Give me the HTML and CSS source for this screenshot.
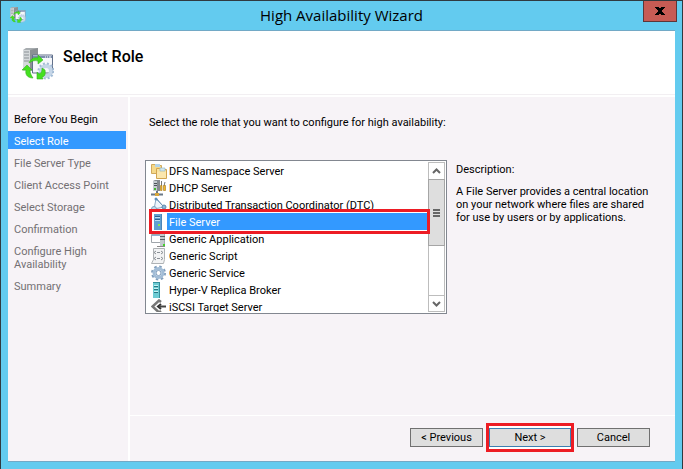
FILE: index.html
```html
<!DOCTYPE html>
<html lang="en">
<head>
  <meta charset="UTF-8">
  <meta name="viewport" content="width=device-width, initial-scale=1.0">
  <title>High Availability Wizard</title>
  <link rel="stylesheet" href="styles.css">
</head>
<body>

  <!-- Shared artwork: the cluster role icon is used in two sizes -->
  <svg class="defs" width="0" height="0" aria-hidden="true">
    <symbol id="role" viewBox="0 0 32 32">
      <path d="M1 2l3-2h12v23H1z" fill="#a8adb0"/>
      <path d="M1 2h7v21H1z" fill="#d5d9db"/>
      <path d="M8 2l8-2v22H8z" fill="#8b9094"/>
      <path d="M2 4h5M2 7h5M2 10h5M2 13h5" stroke="#8b9196"/>
      <path d="M10.500 7h20v18h-20z" fill="#f5f7fb" stroke="#62718b"/>
      <path d="M11 8h19v2H11z" fill="#7d8eae"/>
      <path d="M23 9h1m1 0h1m1 0h2" stroke="#fff"/>
      <circle cx="24" cy="23" r="5" fill="none" stroke="#c5d6e8" stroke-width="4"/>
      <circle cx="24" cy="23" r="7.500" fill="none" stroke="#a3bcd6" stroke-width="2" stroke-dasharray="2 2"/>
      <path d="M7 15c1-4 5-6 9-5V7l5 5-5 4v-3c-4-1-6 0-9 2z" fill="#45e020" stroke="#35b020" stroke-width=".6"/>
      <path d="M11 30c-6 0-8-4-7-8H0l5-5 5 5H8c0 3 1 5 3 8z" fill="#45e020" stroke="#35b020" stroke-width=".6"/>
      <path d="M23 22c1 5-1 7-3 7l1 2h-6v-7l2 2c3-1 3-4 3-6z" fill="#45e020" stroke="#35b020" stroke-width=".6"/>
    </symbol>
  </svg>

  <div class="window">
    <header class="titlebar">
      <svg class="titlebar-icon" width="16" height="16"><use href="#role"/></svg>
      <h1>High Availability Wizard</h1>
      <button type="button" class="close-btn" aria-label="Close">
        <svg width="10" height="8" viewBox="0 0 10 8"><path d="M0 0h4v1h2V0h4v1H9v1H8v1H7v2h1v1h1v1h1v1H6V7H4v1H0V7h1V6h1V5h1V3H2V2H1V1H0z"/></svg>
      </button>
    </header>

    <div class="wizard">
      <div class="page-header">
        <svg width="32" height="32"><use href="#role"/></svg>
        <h2>Select Role</h2>
      </div>

      <div class="wizard-body">
        <nav class="steps" aria-label="Steps">
          <ul>
            <li class="done">Before You Begin</li>
            <li class="current" aria-current="step">Select Role</li>
            <li>File Server Type</li>
            <li>Client Access Point</li>
            <li>Select Storage</li>
            <li>Confirmation</li>
            <li>Configure High Availability</li>
            <li>Summary</li>
          </ul>
        </nav>

        <form class="main">
          <div class="page">
            <p class="prompt" id="prompt">Select the role that you want to configure for high availability:</p>

            <div class="columns">
              <div class="list-box">
                <div class="roles" role="radiogroup" aria-labelledby="prompt">
                  <label class="role">
                    <input type="radio" name="role">
                    <svg width="16" height="16" viewBox="0 0 16 16"><path d="M.5 10.500v-9h4l1 1h5v8z" fill="#f5d98a" stroke="#d0aa5c"/><path d="M4 1h5v3H4z" fill="#b5d4e6"/><path d="M5.500 15.500v-10h3l1 1h6v9z" fill="#fae3a0" stroke="#d1a550"/><path d="M9 5h5v3H9z" fill="#d2e8ef" stroke="#8cb4c8" stroke-width=".6"/><path d="M6 9h9v6H6z" fill="#fbe7ae"/></svg>
                    <span>DFS Namespace Server</span>
                  </label>
                  <label class="role">
                    <input type="radio" name="role">
                    <svg width="16" height="16" viewBox="0 0 16 16"><path d="M2 1l2-1h5v11H2z" fill="#858b90"/><path d="M2 1h4v10H2z" fill="#c5cbd0"/><path d="M3 3.500h3M3 5.500h3" stroke="#4c5359"/><path d="M3 8h2v2H3z" fill="#41b832"/><path d="M0 14.500h12M6 11v3" stroke="#6a7988" stroke-width="2"/><path d="M4 13h4v3H4z" fill="#d6a73c"/><path d="M10.500 1v5M14 2l-1 4" stroke="#777"/><path d="M9.500 5.500h1.500v5H9.500zM12.500 5.500h2v5h-2z" fill="#f0b52c" stroke="#a87818" stroke-width=".6"/></svg>
                    <span>DHCP Server</span>
                  </label>
                  <label class="role">
                    <input type="radio" name="role">
                    <svg width="16" height="16" viewBox="0 0 16 16"><path d="M5 2L3 12l10-2z" fill="#edf5fc" stroke="#8cabc6"/><path d="M6 2l6 7" stroke="#6d92b3"/><circle cx="5" cy="2" r="1.500" fill="#5f92bd"/><circle cx="3" cy="12" r="2.500" fill="#c4dbec" stroke="#7fa3c0"/><circle cx="13" cy="10" r="2" fill="#8db8da" stroke="#6089ab"/></svg>
                    <span>Distributed Transaction Coordinator (DTC)</span>
                  </label>
                  <label class="role selected">
                    <input type="radio" name="role" checked>
                    <svg width="16" height="16" viewBox="0 0 16 16"><path d="M3 0h8v16H3z" fill="#4b86b8"/><path d="M3 0h7v16H3z" fill="#62a0d0"/><path d="M4 2.500h5M4 5.500h5" stroke="#2f6490"/><path d="M4 3.500h5M4 6.500h5" stroke="#b9def4"/><path d="M7 10h2v2H7z" fill="#8be84e"/></svg>
                    <span>File Server</span>
                  </label>
                  <label class="role">
                    <input type="radio" name="role">
                    <svg width="16" height="16" viewBox="0 0 16 16"><path d="M.5 3.500h9v8H.5z" fill="#fff" stroke="#a0a6ab"/><path d="M1 4h8v1H1z" fill="#8eb0d2"/><path d="M9 0h5v15H9z" fill="#a6adb3"/><path d="M9 0h4v15H9z" fill="#c5cace"/><path d="M9 5.500h5M9 8.500h5" stroke="#596268"/><path d="M12 13h2v2h-2z" fill="#44d22c"/><path d="M6 15.500h8" stroke="#888"/></svg>
                    <span>Generic Application</span>
                  </label>
                  <label class="role">
                    <input type="radio" name="role">
                    <svg width="16" height="16" viewBox="0 0 16 16"><path d="M2.500.500h11v11l-1 4h-12l2-4z" fill="#f2f3f4" stroke="#aeb2b5"/><path d="M5 3L3 4.500 5 6m5-3l2 1.500L10 6M5 9l-2 1.500L5 12m5-3l2 1.500-2 1.500M6 4.500h3m-3 6h3" fill="none" stroke="#8a9095"/></svg>
                    <span>Generic Script</span>
                  </label>
                  <label class="role">
                    <input type="radio" name="role">
                    <svg width="16" height="16" viewBox="0 0 16 16"><circle cx="7.500" cy="8" r="6.500" fill="none" stroke="#829fbd" stroke-width="2" stroke-dasharray="2.500 2.600"/><circle cx="7.500" cy="8" r="4.500" fill="#fff" stroke="#a2bdd7" stroke-width="3"/><circle cx="7.500" cy="8" r="2.500" fill="#fff" stroke="#7e9dbd"/></svg>
                    <span>Generic Service</span>
                  </label>
                  <label class="role">
                    <input type="radio" name="role">
                    <svg width="16" height="16" viewBox="0 0 16 16"><path d="M2 0h7v16H2z" fill="#348f9b"/><path d="M2 1h6v15H2z" fill="#6ccbd3"/><path d="M3 4.500h4M3 7.500h4M3 10.500h4" stroke="#277783"/><path d="M3 3.500h4M3 6.500h4M3 9.500h4" stroke="#c7f4f4"/></svg>
                    <span>Hyper-V Replica Broker</span>
                  </label>
                  <label class="role">
                    <input type="radio" name="role">
                    <svg width="16" height="16" viewBox="0 0 16 16"><path d="M10 3L8 1.500 1.500 7.500 8 13.500 10 12" fill="none" stroke="#777" stroke-width="2.500"/><path d="M10 5L7 7.500l3 2.500" fill="none" stroke="#333" stroke-width="2"/><path d="M8 7.500h7" stroke="#444" stroke-width="2"/></svg>
                    <span>iSCSI Target Server</span>
                  </label>
                </div>
                <div class="scrollbar">
                  <button type="button" class="scroll-btn" aria-label="Scroll up">
                    <svg width="9" height="6" viewBox="0 0 9 6"><path d="M1 5l3.500-3.500L8 5" fill="none" stroke="#666" stroke-width="2"/></svg>
                  </button>
                  <div class="thumb"><i></i><i></i><i></i></div>
                  <button type="button" class="scroll-btn scroll-down" aria-label="Scroll down">
                    <svg width="9" height="6" viewBox="0 0 9 6"><path d="M1 1l3.500 3.500L8 1" fill="none" stroke="#666" stroke-width="2"/></svg>
                  </button>
                </div>
              </div>

              <div class="description">
                <p>Description:</p>
                <p>A File Server provides a central location on your network where files are shared for use by users or by applications.</p>
              </div>
            </div>
          </div>

          <footer class="buttons">
            <button type="button" class="btn">&lt; Previous</button>
            <span class="highlight"><button type="submit" class="btn btn-default">Next &gt;</button></span>
            <button type="button" class="btn">Cancel</button>
          </footer>
        </form>
      </div>
    </div>
  </div>

</body>
</html>
```
FILE: styles.css
```css
* {
  box-sizing: border-box;
}
body {
  margin: 0;
  font-family: Roboto, sans-serif;
  font-size: 11px;
  line-height: 13px;
  color: #000;
}
h1, h2, p, ul {
  margin: 0;
  padding: 0;
}
button {
  font: inherit;
  color: inherit;
  padding: 0;
}
svg {
  display: block;
  flex: none;
}
.defs {
  position: absolute;
}

/* Window frame */
.window {
  display: flex;
  flex-direction: column;
  min-height: 100vh;
  padding: 0 7px 7px;
  background: #63cbef;
  border: 1px solid #303a40;
  border-bottom: 0;
}
.titlebar {
  display: grid;
  grid-template-columns: 48px 1fr 48px;
  height: 29px;
}
.titlebar-icon {
  margin: 6px 0 0 2px;
}
.titlebar h1 {
  font-family: "Open Sans", sans-serif;
  font-size: 15px;
  font-weight: 400;
  line-height: 29px;
  text-align: center;
}
.close-btn {
  display: flex;
  align-items: center;
  justify-content: center;
  justify-self: end;
  width: 34px;
  height: 21px;
  margin-right: -2px;
  background: #c75b54;
  border: 1px solid #5d3638;
  border-top: 0;
}

/* Wizard */
.wizard {
  flex: 1;
  display: flex;
  flex-direction: column;
  background: #f7f3f7;
  border-top: 1px solid #72a9c6;
  border-bottom: 1px solid #72a9c6;
}
.page-header {
  display: flex;
  gap: 9px;
  height: 66px;
  padding: 17px 14px 0;
  background: #fff;
  border-bottom: 2px solid #fff;
  box-shadow: inset 0 -1px #f2eff2;
}
.page-header h2 {
  font-size: 16px;
  font-weight: 500;
  line-height: 17px;
}
.wizard-body {
  flex: 1;
  display: flex;
}
.steps {
  width: 122px;
  padding-top: 12px;
  border-right: 2px solid #fff;
}
.steps ul {
  display: flex;
  flex-direction: column;
  gap: 4px;
  list-style: none;
}
.steps li {
  margin-right: 2px;
  padding: 4px 12px 1px 6px;
  color: #737073;
}
.steps .done {
  color: #000;
}
.steps .current {
  background: #3399ff;
  color: #fff;
}
.main {
  flex: 1;
  display: flex;
  flex-direction: column;
}
.page {
  flex: 1;
  padding: 18px 24px 16px 15px;
}
.prompt {
  padding: 1px 4px;
}
.columns {
  display: flex;
  gap: 9px;
  margin-top: 30px;
}

/* Role list */
.list-box {
  flex: 0 0 302px;
  display: flex;
  height: 154px;
  padding: 1px;
  background: #fff;
  border: 1px solid #828790;
}
/* runs 2px over the scrollbar so the frame of the selected row is not cut */
.roles {
  position: relative;
  z-index: 1;
  flex: 1;
  height: 150px;
  margin-right: -2px;
  padding: 0 2px 0 3px;
  overflow: hidden;
}
.role {
  position: relative;
  display: flex;
  align-items: center;
  height: 17px;
  padding-left: 1px;
}
.role input {
  position: absolute;
  inset: 0;
  margin: 0;
  appearance: none;
  outline: none;
}
.role span {
  flex: 1;
  padding: 3px 2px 1px;
  white-space: nowrap;
}
.selected {
  z-index: 1;
}
.selected span {
  background: #3399ff;
  color: #fff;
}
.selected::after {
  content: "";
  position: absolute;
  inset: -4px -2px -4px -1px;
  border: 3px solid #ed1c24;
}
.scrollbar {
  display: flex;
  flex-direction: column;
  width: 17px;
  border: 1px solid #bdbdbd;
}
.scroll-btn {
  display: flex;
  align-items: center;
  justify-content: center;
  height: 16px;
  background: #fff;
  border: 0;
}
.scroll-down {
  margin-top: auto;
  border-top: 1px solid #bdbdbd;
}
.thumb {
  display: flex;
  flex-direction: column;
  align-items: center;
  justify-content: center;
  gap: 1px;
  height: 67px;
  margin: 0 -1px;
  background: #dedede;
  border: 1px solid #a5a5a5;
}
.thumb i {
  width: 7px;
  height: 2px;
  background: #666;
}
.description {
  flex: 1;
  display: flex;
  flex-direction: column;
  gap: 9px;
  padding-top: 3px;
}

/* Footer buttons */
.buttons {
  display: flex;
  align-items: center;
  justify-content: flex-end;
  gap: 3px;
  height: 46px;
  padding: 0 25px 2px 0;
  border-top: 1px solid #fff;
}
.btn {
  width: 73px;
  height: 19px;
  background: #dedede;
  border: 1px solid #707070;
}
.highlight {
  padding: 2px 0;
  background: #fff;
  border: 3px solid #ed1c24;
}
.btn-default {
  display: block;
  width: 82px;
  border-color: #3c7fb1;
}
```
